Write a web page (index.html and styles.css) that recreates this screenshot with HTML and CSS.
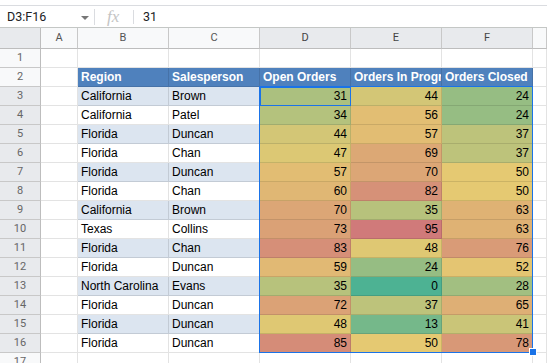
FILE: index.html
```html
<!doctype html>
<html>
    <head>
        <title>Orders - Sheet1</title>
        <link rel="stylesheet" href="styles.css">
    </head>
    <body>
        <div class="formula-bar">
            <div class="name-box">
                <span>D3:F16</span>
                <span class="caret"></span>
            </div>
            <div class="sep"></div>
            <div class="fx">fx</div>
            <div class="sep short"></div>
            <div class="formula">31</div>
        </div>
        <div class="sheet">
            <div class="grid">
                <div class="corner"></div>
                <div class="col-head">A</div>
                <div class="col-head">B</div>
                <div class="col-head">C</div>
                <div class="col-head sel">D</div>
                <div class="col-head sel">E</div>
                <div class="col-head sel">F</div>
                <div class="col-head"></div>

                <div class="row-head">1</div>
                <div class="cell"></div><div class="cell"></div><div class="cell"></div>
                <div class="cell"></div><div class="cell"></div><div class="cell"></div><div class="cell"></div>

                <div class="row-head">2</div>
                <div class="cell"></div>
                <div class="cell head">Region</div>
                <div class="cell head">Salesperson</div>
                <div class="cell head">Open Orders</div>
                <div class="cell head">Orders In Progress</div>
                <div class="cell head">Orders Closed</div>
                <div class="cell"></div>

                <div class="row-head sel">3</div>
                <div class="cell"></div><div class="cell band">California</div><div class="cell band">Brown</div>
                <div class="cell num">31</div><div class="cell num">44</div><div class="cell num">24</div><div class="cell"></div>

                <div class="row-head sel">4</div>
                <div class="cell"></div><div class="cell">California</div><div class="cell">Patel</div>
                <div class="cell num">34</div><div class="cell num">56</div><div class="cell num">24</div><div class="cell"></div>

                <div class="row-head sel">5</div>
                <div class="cell"></div><div class="cell band">Florida</div><div class="cell band">Duncan</div>
                <div class="cell num">44</div><div class="cell num">57</div><div class="cell num">37</div><div class="cell"></div>

                <div class="row-head sel">6</div>
                <div class="cell"></div><div class="cell">Florida</div><div class="cell">Chan</div>
                <div class="cell num">47</div><div class="cell num">69</div><div class="cell num">37</div><div class="cell"></div>

                <div class="row-head sel">7</div>
                <div class="cell"></div><div class="cell band">Florida</div><div class="cell band">Duncan</div>
                <div class="cell num">57</div><div class="cell num">70</div><div class="cell num">50</div><div class="cell"></div>

                <div class="row-head sel">8</div>
                <div class="cell"></div><div class="cell">Florida</div><div class="cell">Chan</div>
                <div class="cell num">60</div><div class="cell num">82</div><div class="cell num">50</div><div class="cell"></div>

                <div class="row-head sel">9</div>
                <div class="cell"></div><div class="cell band">California</div><div class="cell band">Brown</div>
                <div class="cell num">70</div><div class="cell num">35</div><div class="cell num">63</div><div class="cell"></div>

                <div class="row-head sel">10</div>
                <div class="cell"></div><div class="cell">Texas</div><div class="cell">Collins</div>
                <div class="cell num">73</div><div class="cell num">95</div><div class="cell num">63</div><div class="cell"></div>

                <div class="row-head sel">11</div>
                <div class="cell"></div><div class="cell band">Florida</div><div class="cell band">Chan</div>
                <div class="cell num">83</div><div class="cell num">48</div><div class="cell num">76</div><div class="cell"></div>

                <div class="row-head sel">12</div>
                <div class="cell"></div><div class="cell">Florida</div><div class="cell">Duncan</div>
                <div class="cell num">59</div><div class="cell num">24</div><div class="cell num">52</div><div class="cell"></div>

                <div class="row-head sel">13</div>
                <div class="cell"></div><div class="cell band">North Carolina</div><div class="cell band">Evans</div>
                <div class="cell num">35</div><div class="cell num">0</div><div class="cell num">28</div><div class="cell"></div>

                <div class="row-head sel">14</div>
                <div class="cell"></div><div class="cell">Florida</div><div class="cell">Duncan</div>
                <div class="cell num">72</div><div class="cell num">37</div><div class="cell num">65</div><div class="cell"></div>

                <div class="row-head sel">15</div>
                <div class="cell"></div><div class="cell band">Florida</div><div class="cell band">Duncan</div>
                <div class="cell num">48</div><div class="cell num">13</div><div class="cell num">41</div><div class="cell"></div>

                <div class="row-head sel">16</div>
                <div class="cell"></div><div class="cell">Florida</div><div class="cell">Duncan</div>
                <div class="cell num">85</div><div class="cell num">50</div><div class="cell num">78</div><div class="cell"></div>

                <div class="row-head">17</div>
                <div class="cell"></div><div class="cell"></div><div class="cell"></div>
                <div class="cell"></div><div class="cell"></div><div class="cell"></div><div class="cell"></div>
            </div>
            <div class="range"></div>
            <div class="active"></div>
            <div class="handle"></div>
        </div>
        <script src="scale.js"></script>
    </body>
</html>
```

FILE: styles.css
```css
* {
    box-sizing: border-box;
}
html, body {
    margin: 0;
    padding: 0;
    overflow: hidden;
}
body {
    background: #fff;
    font-family: "Liberation Sans", Arial, sans-serif;
    color: #000;
    padding-top: 5px;
}
.formula-bar {
    display: flex;
    align-items: center;
    height: 22px;
    border-top: 1px solid #dadce0;
    font-family: Roboto, "Liberation Sans", sans-serif;
    font-size: 12.5px;
    color: #202124;
}
.name-box {
    display: flex;
    align-items: center;
    justify-content: space-between;
    width: 94px;
    padding: 0 5px 0 7px;
}
.caret {
    width: 0;
    height: 0;
    border-left: 4px solid transparent;
    border-right: 4px solid transparent;
    border-top: 4px solid #777;
    margin-top: 2px;
}
.sep {
    width: 1px;
    height: 16px;
    background: #dadce0;
}
.sep.short {
    height: 14px;
}
.fx {
    width: 38px;
    padding-left: 12px;
    font-family: "Liberation Serif", serif;
    font-style: italic;
    font-size: 17px;
    color: #c4c4c4;
    line-height: 20px;
}
.formula {
    padding-left: 9px;
}
.sheet {
    position: relative;
    border-top: 1px solid #c4c7c5;
}
.grid {
    display: grid;
    grid-template-columns: 41px 37px 91px 91px 91px 91px 91px minmax(0, 1fr);
    grid-template-rows: 21px;
    grid-auto-rows: 19px;
}
.grid > div {
    overflow: hidden;
    white-space: nowrap;
}
.corner {
    background: #e8eaed;
    border-right: 1px solid #bdbdbd;
    border-bottom: 1px solid #bdbdbd;
}
.col-head {
    background: #f8f9fa;
    border-right: 1px solid #c8c8c8;
    border-bottom: 1px solid #bdbdbd;
    font-family: Roboto, "Liberation Sans", sans-serif;
    font-size: 11px;
    color: #555;
    text-align: center;
    line-height: 20px;
}
.col-head.sel {
    background: #e8eaed;
    color: #444;
}
.row-head {
    background: #f8f9fa;
    border-right: 1px solid #bdbdbd;
    border-bottom: 1px solid #c8c8c8;
    font-family: Roboto, "Liberation Sans", sans-serif;
    font-size: 11px;
    color: #666;
    text-align: center;
    line-height: 18px;
}
.row-head.sel {
    background: #e8eaed;
}
.cell {
    border-right: 1px solid rgba(0, 0, 0, 0.11);
    border-bottom: 1px solid rgba(0, 0, 0, 0.11);
    font-size: 12px;
    line-height: 18px;
    padding: 0 3px;
}
.cell.head {
    background: #4f81bd;
    color: #fff;
    font-weight: bold;
    padding-right: 0;
}
.cell.band {
    background: #dce5f0;
}
.cell.num {
    text-align: right;
}
.range {
    position: absolute;
    left: 259px;
    top: 58px;
    width: 274px;
    height: 267px;
    border: 1px solid #1a73e8;
    pointer-events: none;
}
.active {
    position: absolute;
    left: 259px;
    top: 58px;
    width: 92px;
    height: 20px;
    border: 2px solid #1a73e8;
    border-right-width: 1px;
    border-bottom-width: 1px;
}
.handle {
    position: absolute;
    left: 529px;
    top: 320px;
    width: 8px;
    height: 8px;
    background: #1a73e8;
    border: 1px solid #fff;
}
```

FILE: scale.js
```js
// colour scale for D3:F16: min 0 (green), mid 50 (yellow), max 95 (red)
var lo = [77, 178, 147];
var mid = [229, 201, 114];
var hi = [208, 122, 122];

function mix(a, b, t) {
    return a.map(function (v, i) {
        return Math.round(v + (b[i] - v) * t);
    });
}

function colorFor(v) {
    var c = v <= 50 ? mix(lo, mid, v / 50) : mix(mid, hi, (v - 50) / 45);
    return 'rgb(' + c.join(',') + ')';
}

document.querySelectorAll('.cell.num').forEach(function (el) {
    el.style.background = colorFor(+el.textContent);
});
```
